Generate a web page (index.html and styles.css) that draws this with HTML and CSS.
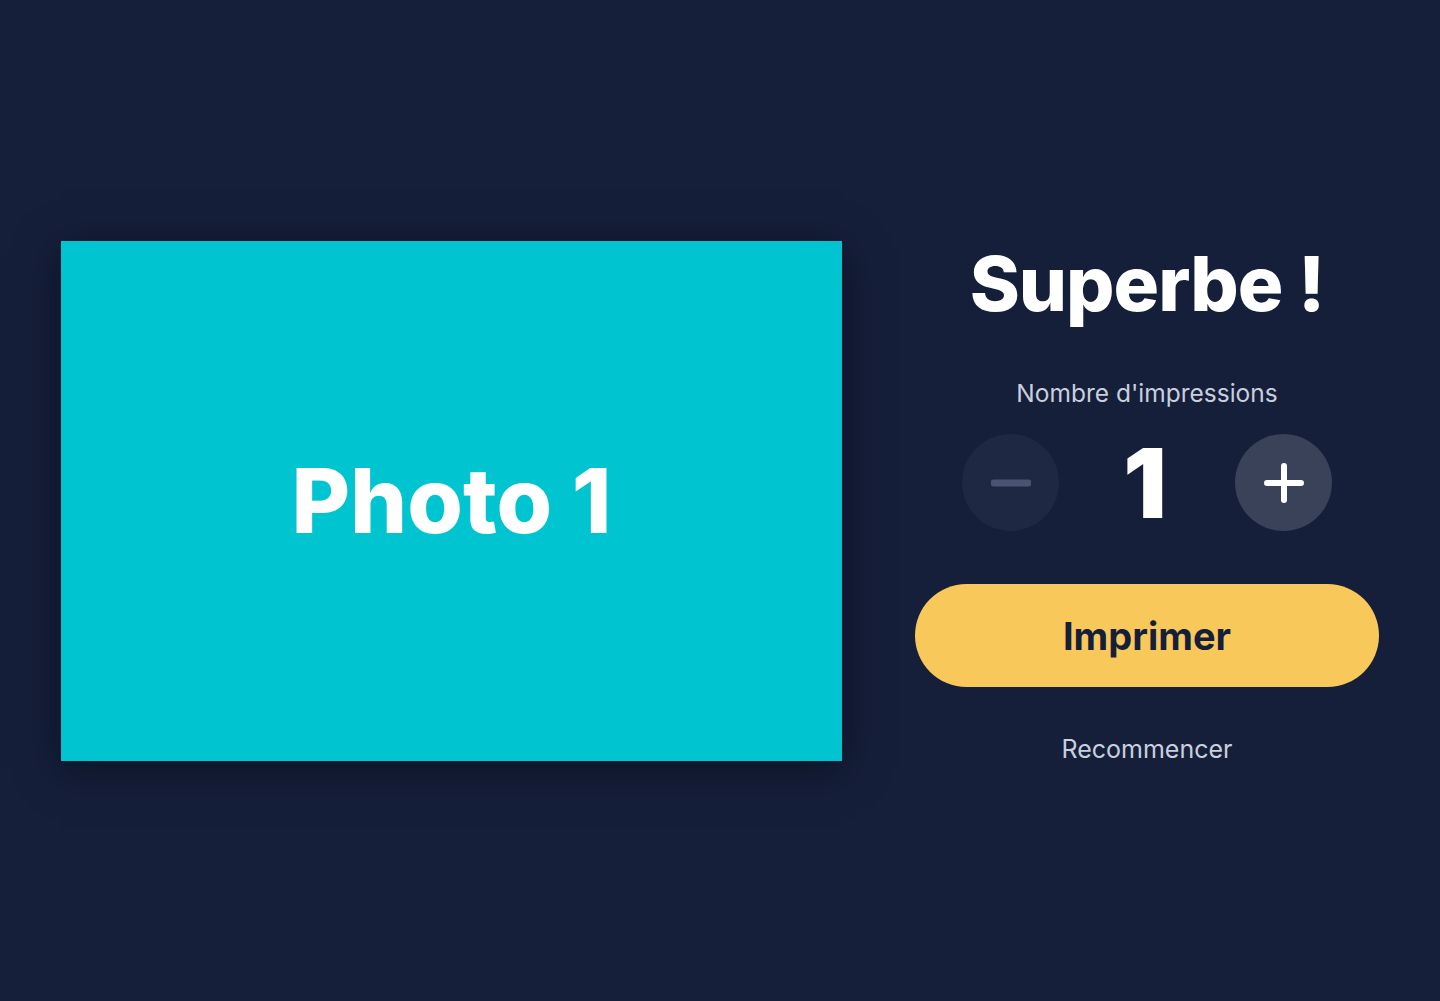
FILE: index.html
```html
<!DOCTYPE html>
<html lang="fr">
<head>
<meta charset="utf-8">
<title>Superbe !</title>
<link rel="stylesheet" href="styles.css">
</head>
<body>
<main class="screen">
  <div class="photo"><span class="photo-label">Photo 1</span></div>
  <section class="panel">
    <h1 class="title">Superbe !</h1>
    <p class="label">Nombre d'impressions</p>
    <div class="stepper">
      <button class="step step-minus" aria-label="Moins">
        <svg width="40" height="40" viewBox="0 0 40 40"><line x1="3" y1="20" x2="37" y2="20" stroke="#4a5370" stroke-width="7" stroke-linecap="round"/></svg>
      </button>
      <span class="count">1</span>
      <button class="step step-plus" aria-label="Plus">
        <svg width="40" height="40" viewBox="0 0 40 40"><line x1="3" y1="20" x2="37" y2="20" stroke="#ffffff" stroke-width="6" stroke-linecap="round"/><line x1="20" y1="3" x2="20" y2="37" stroke="#ffffff" stroke-width="6" stroke-linecap="round"/></svg>
      </button>
    </div>
    <button class="print">Imprimer</button>
    <a class="restart" href="#">Recommencer</a>
  </section>
</main>
</body>
</html>
```
FILE: styles.css
```css
* { box-sizing: border-box; }
html, body { margin: 0; height: 100%; }
body {
  background: #161f3a;
  font-family: Inter, "Noto Sans", sans-serif;
  color: #fff;
}
.screen {
  height: 1001px;
  display: flex;
  align-items: center;
  justify-content: center;
  gap: 73px;
}
.photo {
  width: 781px;
  height: 520px;
  background: #00c4cf;
  display: flex;
  align-items: center;
  justify-content: center;
  box-shadow: 0 8px 40px rgba(5, 10, 25, 0.6);
}
.photo-label {
  font-size: 90px;
  font-weight: 800;
  letter-spacing: 0;
  color: #fff;
}
.panel {
  width: 464px;
  padding-top: 6px;
  display: flex;
  flex-direction: column;
  align-items: center;
}
.title {
  margin: 0;
  font-size: 76px;
  font-weight: 800;
  line-height: 1;
  letter-spacing: -1px;
}
.label {
  margin: 60px 0 0;
  font-size: 24.5px;
  line-height: 1;
  color: #c8cfdf;
}
.stepper {
  margin-top: 29px;
  display: flex;
  align-items: center;
  gap: 48px;
}
.step {
  width: 97px;
  height: 97px;
  border-radius: 50%;
  border: none;
  padding: 0;
  display: flex;
  align-items: center;
  justify-content: center;
}
.step-minus { background: #1f2842; }
.step-plus { background: #3a4259; }
.count {
  width: 80px;
  text-align: center;
  font-size: 96px;
  font-weight: 900;
  line-height: 1;
  padding-right: 4px;
}
.print {
  margin-top: 53px;
  width: 464px;
  height: 103px;
  border: none;
  border-radius: 52px;
  background: #f9c85b;
  color: #161f3a;
  font-family: Inter, "Noto Sans", sans-serif;
  font-size: 38px;
  font-weight: 700;
}
.restart {
  margin-top: 50px;
  font-size: 25px;
  line-height: 1;
  color: #c8cfdf;
  text-decoration: none;
}
```
